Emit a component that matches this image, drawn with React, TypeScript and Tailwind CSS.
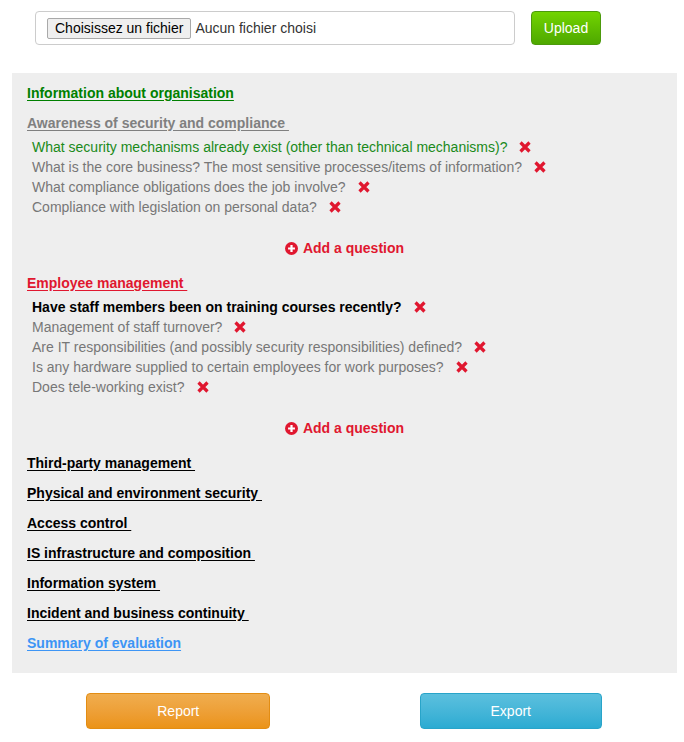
import React from "react";

const XIcon = () => (
  <svg width="12" height="12" viewBox="0 0 12 12" className="inline-block shrink-0">
    <path d="M1.5 1.5 L10.5 10.5 M10.5 1.5 L1.5 10.5" stroke="#e0172f" strokeWidth="3.2" strokeLinecap="butt" />
  </svg>
);

const PlusCircle = () => (
  <svg width="13" height="13" viewBox="0 0 14 14" className="inline-block shrink-0">
    <circle cx="7" cy="7" r="7" fill="#e0172f" />
    <path d="M7 3.3 V10.7 M3.3 7 H10.7" stroke="#fff" strokeWidth="2.4" />
  </svg>
);

type Q = { text: string; cls: string };

const Question = ({ q }: { q: Q }) => (
  <div className="flex items-center h-5 pl-[5px]">
    <span className={q.cls}>{q.text}</span>
    <span className="ml-[12px] flex items-center">
      <XIcon />
    </span>
  </div>
);

const AddQuestion = () => (
  <div className="flex items-center justify-center h-5 gap-[5px] text-[14px] font-bold text-[#e0172f]">
    <PlusCircle />
    <span>Add a question</span>
  </div>
);

export default function App() {
  const q1: Q[] = [
    { text: "What security mechanisms already exist (other than technical mechanisms)?", cls: "text-[#1a8a1a]" },
    { text: "What is the core business? The most sensitive processes/items of information?", cls: "text-[#777777]" },
    { text: "What compliance obligations does the job involve?", cls: "text-[#777777]" },
    { text: "Compliance with legislation on personal data?", cls: "text-[#777777]" },
  ];
  const q2: Q[] = [
    { text: "Have staff members been on training courses recently?", cls: "text-black font-bold" },
    { text: "Management of staff turnover?", cls: "text-[#777777]" },
    { text: "Are IT responsibilities (and possibly security responsibilities) defined?", cls: "text-[#777777]" },
    { text: "Is any hardware supplied to certain employees for work purposes?", cls: "text-[#777777]" },
    { text: "Does tele-working exist?", cls: "text-[#777777]" },
  ];
  const sections = [
    "Third-party management ",
    "Physical and environment security ",
    "Access control ",
    "IS infrastructure and composition ",
    "Information system ",
    "Incident and business continuity ",
  ];
  return (
    <div className="w-[684px] bg-white pb-[13px]" style={{ fontFamily: '"Liberation Sans", Arial, sans-serif' }}>
      <div className="flex items-center pt-[11px] pl-[35px] gap-[16px]">
        <div className="w-[480px] h-[34px] border border-[#cccccc] rounded-[4px] bg-white flex items-center pl-[11px]">
          <div className="h-[21px] px-[7px] border border-[#a9a9a9] bg-[#efefef] rounded-[2px] flex items-center text-[14px] text-black">
            Choisissez un fichier
          </div>
          <span className="ml-[4px] text-[14px] text-[#333333]">Aucun fichier choisi</span>
        </div>
        <div className="w-[70px] h-[34px] rounded-[4px] border border-[#4c9a0c] bg-gradient-to-b from-[#72d400] to-[#4ea800] text-white text-[14px] flex items-center justify-center">
          Upload
        </div>
      </div>

      <div className="mt-[28px] ml-[12px] w-[665px] bg-[#eeeeee] pt-[10px] pb-[20px] pl-[15px] text-[14px]">
        <div className="h-5 flex items-center">
          <span className="font-bold text-[14px] text-[#008000] underline underline-offset-2">Information about organisation</span>
        </div>
        <div className="h-5 flex items-center mt-[10px]">
          <span className="font-bold text-[14px] text-[#808080] underline underline-offset-2 whitespace-pre">Awareness of security and compliance </span>
        </div>
        <div className="mt-[4px]">
          {q1.map((q) => (
            <Question key={q.text} q={q} />
          ))}
        </div>
        <div className="mt-[21px] pr-[15px]">
          <AddQuestion />
        </div>
        <div className="h-5 flex items-center mt-[15px]">
          <span className="font-bold text-[14px] text-[#e0172f] underline underline-offset-2 whitespace-pre">Employee management </span>
        </div>
        <div className="mt-[4px]">
          {q2.map((q) => (
            <Question key={q.text} q={q} />
          ))}
        </div>
        <div className="mt-[21px] pr-[15px]">
          <AddQuestion />
        </div>
        <div className="mt-[15px] flex flex-col gap-[10px]">
          {sections.map((s) => (
            <div key={s} className="h-5 flex items-center">
              <span className="font-bold text-[14px] text-black underline underline-offset-2 whitespace-pre">{s}</span>
            </div>
          ))}
          <div className="h-5 flex items-center">
            <span className="font-bold text-[14px] text-[#3d95f5] underline underline-offset-2">Summary of evaluation</span>
          </div>
        </div>
      </div>

      <div className="ml-[12px] w-[665px] mt-[20px] grid grid-cols-2">
        <div className="flex justify-center">
          <div className="w-[184px] h-[36px] rounded-[4px] border border-[#e38d13] bg-gradient-to-b from-[#f0ad4e] to-[#eb9316] text-white text-[14px] flex items-center justify-center">
            Report
          </div>
        </div>
        <div className="flex justify-center">
          <div className="w-[182px] h-[36px] rounded-[4px] border border-[#28a4c9] bg-gradient-to-b from-[#5bc0de] to-[#2aabd2] text-white text-[14px] flex items-center justify-center">
            Export
          </div>
        </div>
      </div>
    </div>
  );
}
